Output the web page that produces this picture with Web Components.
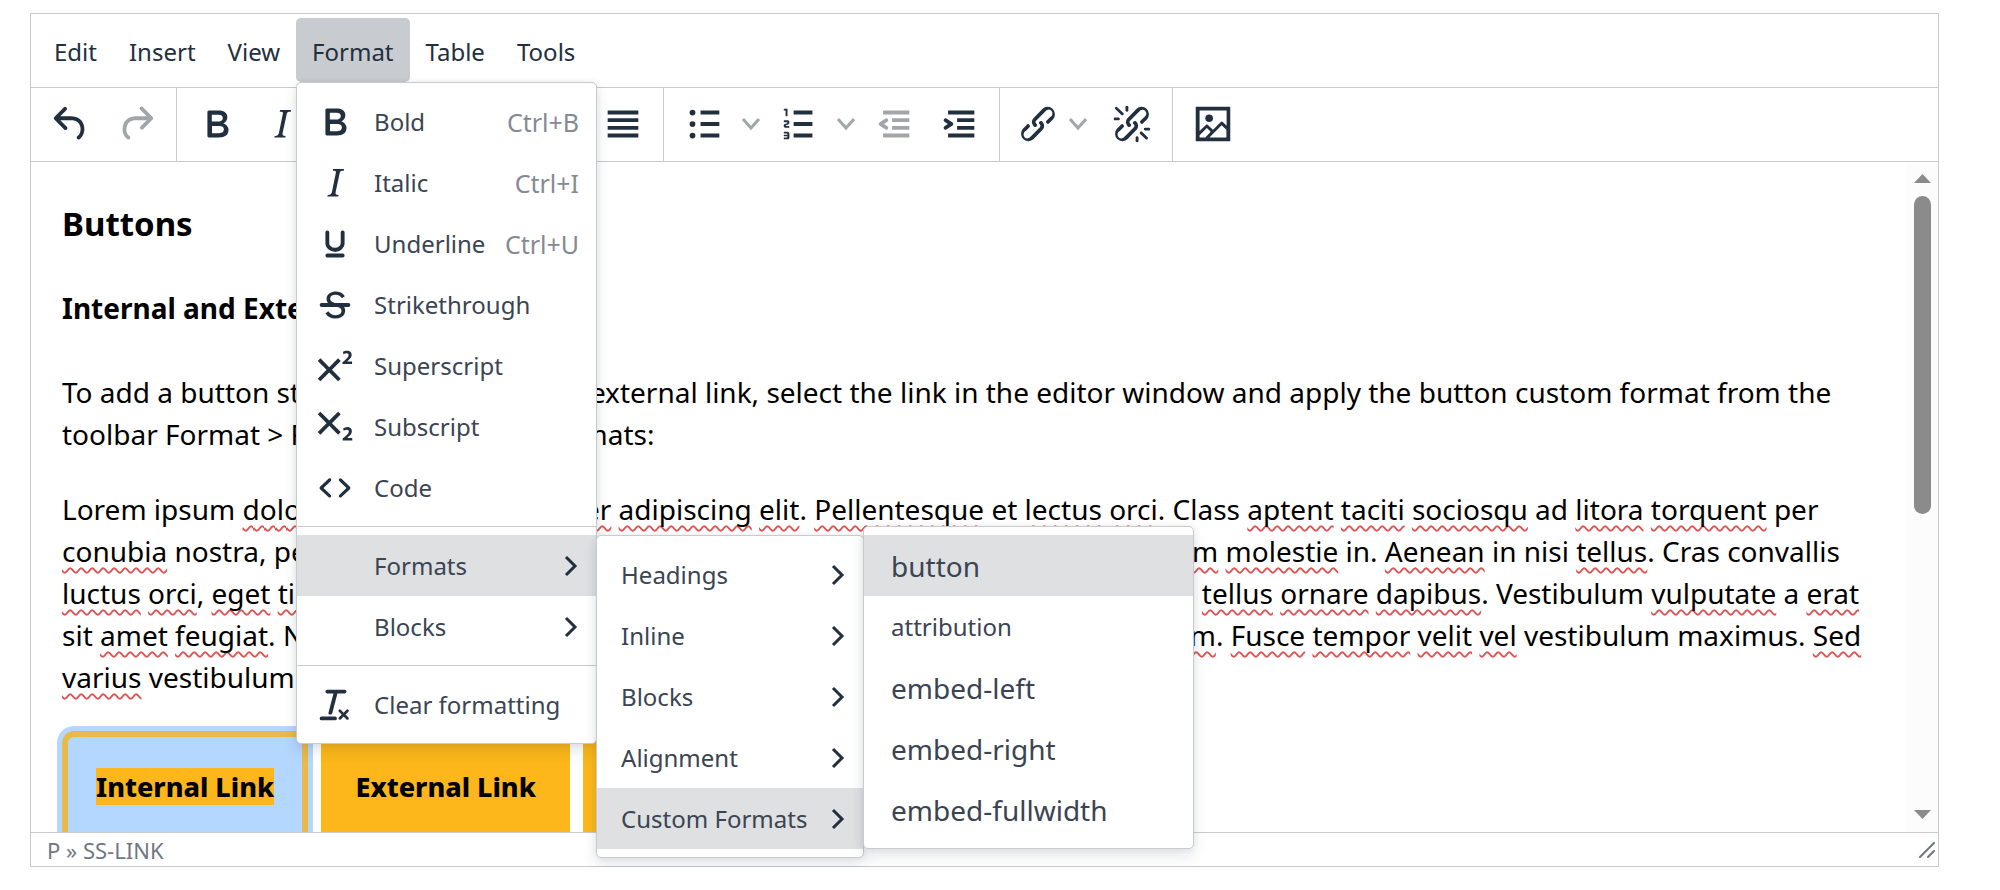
<!DOCTYPE html>
<html lang="en">
<head>
<meta charset="utf-8">
<title>Editor</title>
<style>
    body {
        margin: 0;
        background: #fff;
        color: #222f3e;
        font-family: "Noto Sans", "Open Sans", sans-serif;
        font-size: 24px;
    }
    rich-editor {
        margin: 13px 61px 0 30px;
        height: calc(100vh - 36px);
    }
    /* misspelled words */
    edit-area u {
        text-decoration: underline wavy #dd5555 2px;
        text-underline-offset: 5px;
        text-decoration-skip-ink: none;
    }
</style>
</head>
<body>
<rich-editor>
    <menu-button slot="menubar">Edit</menu-button>
    <menu-button slot="menubar">Insert</menu-button>
    <menu-button slot="menubar">View</menu-button>
    <menu-button slot="menubar" open>Format
        <menu-panel slot="menu" style="--menu-width: 299px">
            <menu-group>
                <menu-item icon="bold" shortcut="Ctrl+B">Bold</menu-item>
                <menu-item icon="italic" shortcut="Ctrl+I">Italic</menu-item>
                <menu-item icon="underline" shortcut="Ctrl+U">Underline</menu-item>
                <menu-item icon="strikethrough">Strikethrough</menu-item>
                <menu-item icon="superscript">Superscript</menu-item>
                <menu-item icon="subscript">Subscript</menu-item>
                <menu-item icon="code">Code</menu-item>
            </menu-group>
            <menu-group>
                <menu-item icon="none" parent active>Formats
                    <menu-panel slot="submenu" style="--menu-width: 266px">
                        <menu-group>
                            <menu-item parent>Headings</menu-item>
                            <menu-item parent>Inline</menu-item>
                            <menu-item parent>Blocks</menu-item>
                            <menu-item parent>Alignment</menu-item>
                            <menu-item parent active drop="up">Custom Formats
                                <menu-panel slot="submenu" style="--menu-width: 329px; --item-indent: 27px">
                                    <menu-group>
                                        <menu-item large active>button</menu-item>
                                        <menu-item>attribution</menu-item>
                                        <menu-item large>embed-left</menu-item>
                                        <menu-item large>embed-right</menu-item>
                                        <menu-item large>embed-fullwidth</menu-item>
                                    </menu-group>
                                </menu-panel>
                            </menu-item>
                        </menu-group>
                    </menu-panel>
                </menu-item>
                <menu-item icon="none" parent>Blocks</menu-item>
            </menu-group>
            <menu-group>
                <menu-item icon="clear">Clear formatting</menu-item>
            </menu-group>
        </menu-panel>
    </menu-button>
    <menu-button slot="menubar">Table</menu-button>
    <menu-button slot="menubar">Tools</menu-button>

    <tool-group slot="toolbar">
        <tool-button icon="undo" label="Undo"></tool-button>
        <tool-button icon="redo" label="Redo" disabled></tool-button>
    </tool-group>
    <tool-group slot="toolbar">
        <tool-button icon="bold" label="Bold"></tool-button>
        <tool-button icon="italic" label="Italic"></tool-button>
        <tool-button icon="underline" label="Underline"></tool-button>
    </tool-group>
    <tool-group slot="toolbar">
        <tool-button icon="left" label="Align left"></tool-button>
        <tool-button icon="center" label="Align center"></tool-button>
        <tool-button icon="right" label="Align right"></tool-button>
        <tool-button icon="justify" label="Justify"></tool-button>
    </tool-group>
    <tool-group slot="toolbar">
        <tool-button icon="bullets" label="Bullet list" split></tool-button>
        <tool-button icon="numbers" label="Numbered list" split></tool-button>
        <tool-button icon="outdent" label="Decrease indent" disabled></tool-button>
        <tool-button icon="indent" label="Increase indent"></tool-button>
    </tool-group>
    <tool-group slot="toolbar">
        <tool-button icon="link" label="Insert link" split="tight"></tool-button>
        <tool-button icon="unlink" label="Remove link"></tool-button>
    </tool-group>
    <tool-group slot="toolbar">
        <tool-button icon="image" label="Insert image"></tool-button>
    </tool-group>

    <edit-area>
        <h3>Buttons</h3>
        <h4>Internal and External Links</h4>
        <p>To add a button style for any internal or external link, select the link in the editor window and apply the button custom format from the<br>
        toolbar Format &gt; Formats &gt; Custom Formats:</p>
        <p>Lorem ipsum <u>dolor</u> sit <u>amet</u>, <u>consectetuer</u> <u>adipiscing</u> <u>elit</u>. <u>Pellentesque</u> et <u>lectus</u> <u>orci</u>. Class <u>aptent</u> <u>taciti</u> <u>sociosqu</u> ad <u>litora</u> <u>torquent</u> per<br>
        <u>conubia</u> nostra, per inceptos himenaeos. Suspendisse sed ligula. Nisl pretium, <u>dignissim</u> <u>molestie</u> in. <u>Aenean</u> in nisi <u>tellus</u>. Cras convallis<br>
        <u>luctus</u> <u>orci</u>, <u>eget</u> <u>tincidunt</u> nunc pharetra vitae. Aenean sit amet dolor id lorem rhoncus <u>tellus</u> <u>ornare</u> <u>dapibus</u>. Vestibulum <u>vulputate</u> a <u>erat</u><br>
        sit <u>amet</u> <u>feugiat</u>. Nullam vel sapien vitae massa luctus egestas. Integer ornare a <u>pretium</u>. <u>Fusce</u> <u>tempor</u> <u>velit</u> <u>vel</u> vestibulum maximus. <u>Sed</u><br>
        <u>varius</u> vestibulum sapien.</p>
        <ss-link href="#internal" selected>Internal Link</ss-link>
        <ss-link href="#external">External Link</ss-link>
        <ss-link href="#document">Document</ss-link>
    </edit-area>

    <span slot="path">P » SS-LINK</span>
</rich-editor>

<script>
const ICONS = {
    none: "",
    undo: `<path d="M6.4 8H12c3.7 0 6.2 2 6.8 5.1.6 2.7-.4 5.6-2.3 6.8a1 1 0 0 1-1-1.8c1.1-.6 1.8-2.7 1.4-4.6-.5-2.1-2.1-3.5-4.9-3.5H6.4l3.3 3.3a1 1 0 1 1-1.4 1.4l-5-5a1 1 0 0 1 0-1.4l5-5a1 1 0 0 1 1.4 1.4L6.4 8Z"/>`,
    redo: `<path d="M17.6 10H12c-2.8 0-4.4 1.4-4.9 3.5-.4 2 .3 4 1.4 4.6a1 1 0 1 1-1 1.8c-2-1.2-2.9-4.1-2.3-6.8.6-3 3-5.1 6.8-5.1h5.6l-3.3-3.3a1 1 0 1 1 1.4-1.4l5 5a1 1 0 0 1 0 1.4l-5 5a1 1 0 0 1-1.4-1.4l3.3-3.3Z"/>`,
    bold: `<path fill-rule="evenodd" d="M7.8 19c-.3 0-.5 0-.6-.2l-.2-.5V5.7c0-.2 0-.4.2-.5l.6-.2h5c1.5 0 2.7.3 3.5 1 .7.6 1.1 1.4 1.1 2.5a3 3 0 0 1-.6 1.9c-.4.6-1 1-1.6 1.2.4.1.9.3 1.3.6s.8.7 1 1.2c.4.4.5 1 .5 1.6 0 1.3-.4 2.3-1.3 3-.8.7-2.1 1-3.8 1H7.8Zm5-8.3c.6 0 1.2-.1 1.6-.5.4-.3.6-.7.6-1.3 0-1.1-.8-1.7-2.3-1.7H9.3v3.5h3.4Zm.5 6c.7 0 1.3-.1 1.7-.4.4-.4.6-.9.6-1.5s-.2-1-.7-1.4c-.4-.3-1-.4-2-.4H9.4v3.8h4Z"/>`,
    italic: `<path d="m16.7 4.7-.1.9h-.3c-.6 0-1 0-1.4.3-.3.3-.4.6-.5 1.1l-2.1 9.8v.6c0 .5.4.8 1.4.8h.2l-.2.8H8l.2-.8h.2c1.1 0 1.8-.5 2-1.5l2-9.8.1-.5c0-.6-.4-.8-1.4-.8h-.3l.2-.9h5.8Z"/>`,
    underline: `<path d="M16 5c.6 0 1 .4 1 1v5.5a4 4 0 0 1-.4 1.8l-1 1.4a5.3 5.3 0 0 1-5.5 1 5 5 0 0 1-1.6-1c-.5-.4-.8-.9-1.1-1.4a4 4 0 0 1-.4-1.8V6c0-.6.4-1 1-1s1 .4 1 1v5.5c0 .3 0 .6.2 1l.6.7a3.3 3.3 0 0 0 2.2.8 3.4 3.4 0 0 0 2.2-.8c.3-.2.4-.5.6-.8l.2-.9V6c0-.6.4-1 1-1ZM8 17h8c.6 0 1 .4 1 1s-.4 1-1 1H8a1 1 0 0 1 0-2Z"/>`,
    strikethrough: `<path d="M15.6 8.5c-.5-.7-1-1.1-1.3-1.3-.6-.4-1.3-.6-2-.6-2.7 0-2.8 1.7-2.8 2.1 0 1.6 1.8 2 3.2 2.3 4.4.9 4.6 2.8 4.6 3.9 0 1.4-.7 4.1-5 4.1A6.2 6.2 0 0 1 7 16.4l1.5-1.1c.4.6 1.6 2 3.7 2 1.6 0 2.5-.4 3-1.2.4-.8.3-2-.8-2.6-.7-.4-1.6-.7-2.9-1-1-.2-3.9-.8-3.9-3.6C7.6 6 10.3 5 12.4 5c2.9 0 4.2 1.6 4.7 2.4l-1.5 1.1Z"/><path d="M5 11h14a1 1 0 0 1 0 2H5a1 1 0 0 1 0-2Z"/>`,
    superscript: `<path d="M15 9.4 10.4 14l4.6 4.6-1.4 1.4L9 15.4 4.4 20 3 18.6 7.6 14 3 9.4 4.4 8 9 12.6 13.6 8 15 9.4Zm5.9 1.6h-5v-1l1-.8 1.7-1.6c.3-.5.5-.9.5-1.3 0-.3 0-.5-.2-.7-.2-.2-.5-.3-.9-.3l-.8.2-.7.4-.4-1.2c.2-.2.5-.4 1-.5.3-.2.8-.2 1.2-.2.8 0 1.4.2 1.8.6.4.4.6 1 .6 1.6 0 .5-.2 1-.5 1.5l-1.3 1.4-.6.5h2.6V11Z"/>`,
    subscript: `<path d="m10.4 10 4.6 4.6-1.4 1.4L9 11.4 4.4 16 3 14.6 7.6 10 3 5.4 4.4 4 9 8.6 13.6 4 15 5.4 10.4 10ZM21 19h-5v-1l1-.8 1.7-1.6c.3-.4.5-.8.5-1.2 0-.3 0-.6-.2-.7-.2-.2-.5-.3-.9-.3a2 2 0 0 0-.8.2l-.7.3-.4-1.1 1-.6 1.2-.2c.8 0 1.4.3 1.8.7.4.4.6.9.6 1.5s-.2 1.1-.5 1.6a8 8 0 0 1-1.3 1.3l-.6.6h2.6V19Z"/>`,
    code: `<path d="M9.8 15.7c.3.3.3.8 0 1-.3.4-.9.4-1.2 0l-4.4-4.1a.8.8 0 0 1 0-1.2l4.4-4.2c.3-.3.9-.3 1.2 0 .3.3.3.8 0 1.1L6 12l3.8 3.7Zm4.4 0c-.3.3-.3.8 0 1 .4.4.9.4 1.2 0l4.4-4.1c.3-.3.3-.9 0-1.2l-4.4-4.2a.8.8 0 0 0-1.2 0c-.3.3-.3.8 0 1.1L18 12l-3.8 3.7Z"/>`,
    clear: `<path d="M13.2 6a1 1 0 0 1 0 .2l-2.6 10a1 1 0 0 1-1 .8h-.2a.8.8 0 0 1-.8-1l2.6-10H8a1 1 0 1 1 0-2h9a1 1 0 0 1 0 2h-3.8ZM5 18h7a1 1 0 0 1 0 2H5a1 1 0 0 1 0-2Zm13 1.5L16.5 18 15 19.5a.7.7 0 0 1-1-1l1.5-1.5-1.5-1.5a.7.7 0 0 1 1-1l1.5 1.5 1.5-1.5a.7.7 0 0 1 1 1L17.5 17l1.5 1.5a.7.7 0 0 1-1 1Z"/>`,
    left: `<path d="M4 5h16v2H4zM4 9h10v2H4zM4 13h16v2H4zM4 17h10v2H4z"/>`,
    center: `<path d="M4 5h16v2H4zM7 9h10v2H7zM4 13h16v2H4zM7 17h10v2H7z"/>`,
    right: `<path d="M4 5h16v2H4zM10 9h10v2H10zM4 13h16v2H4zM10 17h10v2H10z"/>`,
    justify: `<path d="M4 5h16v2H4zM4 9h16v2H4zM4 13h16v2H4zM4 17h16v2H4z"/>`,
    bullets: `<path d="M10.2 5H20v2h-9.8zM10.2 11H20v2h-9.8zM10.2 17H20v2h-9.8z"/><circle cx="6" cy="6" r="1.5"/><circle cx="6" cy="12" r="1.5"/><circle cx="6" cy="18" r="1.5"/>`,
    numbers: `<path d="M9.2 5H19v2H9.2zM9.2 11H19v2H9.2zM9.2 17H19v2H9.2zM6 4v3.5c0 .3-.2.5-.5.5a.5.5 0 0 1-.5-.5V5h-.5a.5.5 0 0 1 0-1H6Zm-1 8.8.2.2h1.3c.3 0 .5.2.5.5s-.2.5-.5.5H4.9a1 1 0 0 1-.9-1V13c0-.4.3-.8.6-1l1.2-.4.2-.3a.2.2 0 0 0-.2-.2H4.5a.5.5 0 0 1-.5-.5c0-.3.2-.5.5-.5h1.6c.5 0 .9.4.9 1v.1c0 .4-.3.8-.6 1l-1.2.4-.2.3ZM7 17v2c0 .6-.4 1-1 1H4.5a.5.5 0 0 1 0-1h1.2c.2 0 .3-.1.3-.3 0-.2-.1-.3-.3-.3H4.4a.4.4 0 1 1 0-.8h1.3c.2 0 .3-.1.3-.3 0-.2-.1-.3-.3-.3H4.5a.5.5 0 1 1 0-1H6c.6 0 1 .4 1 1Z"/>`,
    outdent: `<path d="M6.3 5H20v2H6.3zM11 9h9v2h-9zM11 13h9v2h-9zM6.3 17H20v2H6.3zM8.6 13.2a1 1 0 0 1-1.2 1.6l-3-2a1 1 0 0 1 0-1.6l3-2a1 1 0 0 1 1.2 1.6L6.8 12l1.8 1.2Z"/>`,
    indent: `<path d="M6.3 5H20v2H6.3zM11 9h9v2h-9zM11 13h9v2h-9zM6.3 17H20v2H6.3zM4.4 13.2 6.2 12l-1.8-1.2a1 1 0 0 1 1.2-1.6l3 2a1 1 0 0 1 0 1.6l-3 2a1 1 0 1 1-1.2-1.6Z"/>`,
    link: `<path d="M6.2 12.3a1 1 0 0 1 1.4 1.4l-2 2a2 2 0 1 0 2.6 2.8l4.8-4.8a1 1 0 0 0 0-1.4 1 1 0 1 1 1.4-1.3 2.9 2.9 0 0 1 0 4L9.6 20a3.9 3.9 0 0 1-5.5-5.5l2-2Zm11.6-.6a1 1 0 0 1-1.4-1.4l2-2a2 2 0 1 0-2.6-2.8L11 10.3a1 1 0 0 0 0 1.4A1 1 0 1 1 9.6 13a2.9 2.9 0 0 1 0-4L14.4 4a3.9 3.9 0 0 1 5.5 5.5l-2 2Z"/>`,
    unlink: `<path d="M6.2 12.3a1 1 0 0 1 1.4 1.4l-2 2a2 2 0 1 0 2.6 2.8l4.8-4.8a1 1 0 0 0 0-1.4 1 1 0 1 1 1.4-1.3 2.9 2.9 0 0 1 0 4L9.6 20a3.9 3.9 0 0 1-5.5-5.5l2-2Zm11.6-.6a1 1 0 0 1-1.4-1.4l2.1-2a2 2 0 1 0-2.7-2.8L11 10.3a1 1 0 0 0 0 1.4A1 1 0 1 1 9.6 13a2.9 2.9 0 0 1 0-4L14.4 4a3.9 3.9 0 0 1 5.5 5.5l-2 2ZM7.6 6.3a.8.8 0 0 1-1 1.1L3.3 4.2a.7.7 0 1 1 1-1l3.2 3.1ZM5.1 8.6a.8.8 0 0 1 0 1.5H3a.8.8 0 0 1 0-1.5H5Zm5-3.5a.8.8 0 0 1-1.5 0V3a.8.8 0 0 1 1.5 0V5Zm6 11.8a.8.8 0 0 1 1-1l3.2 3.2a.8.8 0 0 1-1 1L16 17Zm-2.2 2a.8.8 0 0 1 1.5 0V21a.8.8 0 0 1-1.5 0V19Zm5-3.5a.7.7 0 1 1 0-1.5H21a.8.8 0 0 1 0 1.5H19Z"/>`,
    image: `<path fill-rule="evenodd" d="m5 15.7 3.3-3.2c.3-.3.7-.3 1 0L12 15l4.1-4c.3-.4.8-.4 1 0l2 1.9V5H5v10.7ZM5 18v1h3l2.8-2.9-2-2L5 17.9Zm14-3-2.5-2.4-6.4 6.5H19v-4ZM3 3h18v18H3V3Z"/><circle cx="10" cy="9" r="2"/>`,
}

class EditorIcon extends HTMLElement {
    constructor() {
        super()
        this.attachShadow({ mode: "open" })
    }

    connectedCallback() {
        this.shadowRoot.innerHTML = `
            <style>
                :host { display: block; flex: none; width: 46px; height: 46px; }
                svg { display: block; fill: currentColor; }
            </style>
            <svg width="46" height="46" viewBox="0 0 24 24" aria-hidden="true">${ICONS[this.getAttribute("name")] ?? ""}</svg>
        `
    }
}

// MARK: menus
class MenuButton extends HTMLElement {
    constructor() {
        super()
        this.attachShadow({ mode: "open" })
        this.shadowRoot.innerHTML = `
            <style>
                :host { display: block; position: relative; }
                button {
                    display: block;
                    height: 64px;
                    padding: 2px 16px 0;
                    border: 0;
                    border-radius: 5px;
                    background: transparent;
                    font: inherit;
                    color: inherit;
                }
                :host([open]) button { background: #c8cbcf; }
                ::slotted(menu-panel) {
                    position: absolute;
                    top: 100%;
                    left: 0;
                    z-index: 10;
                }
            </style>
            <button type="button"><slot></slot></button>
            <slot name="menu"></slot>
        `
    }
}

class MenuPanel extends HTMLElement {
    constructor() {
        super()
        this.attachShadow({ mode: "open" })
        this.shadowRoot.innerHTML = `
            <style>
                :host {
                    display: block;
                    min-width: var(--menu-width);
                    border: 1px solid #c8cacc;
                    border-radius: 5px;
                    background: #fff;
                    box-shadow: 0 7px 14px rgba(34, 47, 62, 0.12), 0 0 6px rgba(34, 47, 62, 0.08);
                }
            </style>
            <slot></slot>
        `
    }
}

class MenuGroup extends HTMLElement {
    constructor() {
        super()
        this.attachShadow({ mode: "open" })
        this.shadowRoot.innerHTML = `
            <style>
                :host { display: block; padding: 8px 0; }
                :host(:not(:first-child)) { border-top: 1px solid #c8cacc; }
            </style>
            <slot></slot>
        `
    }
}

class MenuItem extends HTMLElement {
    constructor() {
        super()
        this.attachShadow({ mode: "open" })
    }

    connectedCallback() {
        const icon = this.getAttribute("icon")
        const shortcut = this.getAttribute("shortcut")
        this.shadowRoot.innerHTML = `
            <style>
                :host { display: block; position: relative; }
                button {
                    display: flex;
                    align-items: center;
                    width: 100%;
                    height: 61px;
                    padding: 0 17px 0 ${icon ? "15px" : "var(--item-indent, 24px)"};
                    border: 0;
                    background: transparent;
                    font: inherit;
                    color: #3a4452;
                    text-align: left;
                    white-space: nowrap;
                }
                :host([active]) button { background: #dee0e2; }
                :host([large]) button { font-size: 28px; }
                editor-icon { margin-right: 16px; color: #222f3e; }
                .label { flex: 1; }
                kbd { margin-left: 12px; font: inherit; font-size: 25px; color: #848a92; }
                .caret { flex: none; margin-left: 16px; }
                ::slotted(menu-panel) {
                    position: absolute;
                    left: 100%;
                    ${this.getAttribute("drop") === "up" ? "bottom: 0" : "top: 0"};
                }
            </style>
            <button type="button">
                ${icon ? `<editor-icon name="${icon}"></editor-icon>` : ""}
                <span class="label"><slot></slot></span>
                ${shortcut ? `<kbd>${shortcut}</kbd>` : ""}
                ${this.hasAttribute("parent") ? `<svg class="caret" width="16" height="22" viewBox="0 0 16 22" fill="none" stroke="#222f3e" stroke-width="3"><path d="M3 2l9 9-9 9"/></svg>` : ""}
            </button>
            <slot name="submenu"></slot>
        `
    }
}

// MARK: toolbar
class ToolGroup extends HTMLElement {
    constructor() {
        super()
        this.attachShadow({ mode: "open" })
        this.shadowRoot.innerHTML = `
            <style>
                :host { display: flex; padding: 0 8px 0 7px; border-right: 1px solid #c8cacc; }
                :host(:last-of-type) { border-right: 0; }
            </style>
            <slot></slot>
        `
    }
}

class ToolButton extends HTMLElement {
    constructor() {
        super()
        this.attachShadow({ mode: "open" })
    }

    connectedCallback() {
        const label = this.getAttribute("label")
        const disabled = this.hasAttribute("disabled") ? "disabled" : ""
        this.shadowRoot.innerHTML = `
            <style>
                :host { display: flex; color: #222f3e; }
                button {
                    display: flex;
                    align-items: center;
                    justify-content: center;
                    width: 65px;
                    height: 72px;
                    padding: 0;
                    border: 0;
                    background: transparent;
                    color: inherit;
                }
                button:disabled { color: #a3a6a9; }
                .more { width: 30px; }
                :host([split="tight"]) button { width: 61px; }
                :host([split="tight"]) .more { width: 31px; justify-content: flex-start; }
            </style>
            <button type="button" aria-label="${label}" ${disabled}>
                <editor-icon name="${this.getAttribute("icon")}"></editor-icon>
            </button>
            ${this.hasAttribute("split") ? `
                <button type="button" class="more" aria-label="${label} options">
                    <svg width="20" height="20" viewBox="0 0 20 20" fill="none" stroke="#a3a6a9" stroke-width="3"><path d="M2 5l8 9 8-9"/></svg>
                </button>` : ""}
        `
    }
}

// MARK: content
class SsLink extends HTMLElement {
    constructor() {
        super()
        this.attachShadow({ mode: "open" })
    }

    connectedCallback() {
        this.shadowRoot.innerHTML = `
            <style>
                :host { display: inline-block; margin-right: 6px; }
                a {
                    display: block;
                    box-sizing: border-box;
                    height: 115px;
                    padding: 29px 28px;
                    border: 6px solid #fdb71a;
                    border-radius: 8px;
                    background: #fdb71a;
                    color: #000;
                    font-size: 27px;
                    font-weight: 800;
                    line-height: 42px;
                    text-decoration: none;
                }
                :host([selected]) a {
                    border-color: #e9b949;
                    border-radius: 12px;
                    background: #b4d7ff;
                    box-shadow: 0 0 0 5px #b4d7ff;
                }
                :host([selected]) span { background: #fdb71a; }
            </style>
            <a href="${this.getAttribute("href")}"><span><slot></slot></span></a>
        `
    }
}

class EditArea extends HTMLElement {
    constructor() {
        super()
        this.attachShadow({ mode: "open" })
        this.shadowRoot.innerHTML = `
            <style>
                :host {
                    display: flex;
                    flex: 1;
                    min-height: 0;
                    overflow: hidden;
                    color: #000;
                    font-size: 28px;
                    line-height: 42px;
                }
                .page { flex: 1; min-width: 0; padding: 41px 0 0 31px; white-space: nowrap; overflow: hidden; }
                ::slotted(h3) { margin: 0 0 42px; font-size: 33px; }
                ::slotted(h4) { margin: 0 0 42px; font-size: 28px; }
                ::slotted(p) { margin: 0 0 33px; }
                .scroll {
                    display: flex;
                    flex-direction: column;
                    align-items: center;
                    width: 31px;
                    box-sizing: border-box;
                    padding: 12px 7px 13px;
                    background: #fcfcfc;
                }
                .thumb { width: 17px; height: 318px; margin: 13px 0 auto; border-radius: 9px; background: #8b8b8b; }
            </style>
            <div class="page"><slot></slot></div>
            <div class="scroll">
                <svg width="17" height="9" fill="#8b8b8b"><path d="M0 9L8.5 0 17 9z"/></svg>
                <div class="thumb"></div>
                <svg width="17" height="9" fill="#8b8b8b"><path d="M0 0h17L8.5 9z"/></svg>
            </div>
        `
    }
}

class RichEditor extends HTMLElement {
    constructor() {
        super()
        this.attachShadow({ mode: "open" })
        this.shadowRoot.innerHTML = `
            <style>
                :host {
                    display: flex;
                    flex-direction: column;
                    box-sizing: border-box;
                    border: 1px solid #c8cacc;
                }
                .menubar, .toolbar {
                    display: flex;
                    box-sizing: border-box;
                    height: 74px;
                    border-bottom: 1px solid #c8cacc;
                }
                .menubar { align-items: flex-start; padding: 4px 7px 0; }
                .status {
                    display: flex;
                    justify-content: space-between;
                    align-items: center;
                    height: 33px;
                    padding: 0 2px 0 16px;
                    border-top: 1px solid #c8cacc;
                    color: #70777f;
                    font-size: 22px;
                }
            </style>
            <div class="menubar" role="menubar"><slot name="menubar"></slot></div>
            <div class="toolbar" role="toolbar"><slot name="toolbar"></slot></div>
            <slot></slot>
            <div class="status">
                <slot name="path"></slot>
                <svg width="17" height="17" viewBox="0 0 17 17" stroke="#70777f" stroke-width="2" stroke-linecap="round"><path d="M1 16L15 2M9 16l6-6"/></svg>
            </div>
        `
    }
}

customElements.define("editor-icon", EditorIcon)
customElements.define("menu-button", MenuButton)
customElements.define("menu-panel", MenuPanel)
customElements.define("menu-group", MenuGroup)
customElements.define("menu-item", MenuItem)
customElements.define("tool-group", ToolGroup)
customElements.define("tool-button", ToolButton)
customElements.define("ss-link", SsLink)
customElements.define("edit-area", EditArea)
customElements.define("rich-editor", RichEditor)
</script>
</body>
</html>
